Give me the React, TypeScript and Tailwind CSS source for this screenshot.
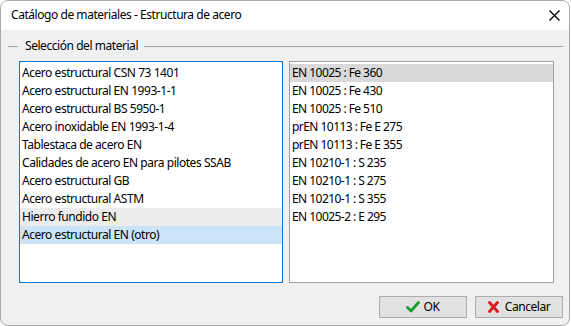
import React from "react";

const leftItems = [
  "Acero estructural CSN 73 1401",
  "Acero estructural EN 1993-1-1",
  "Acero estructural BS 5950-1",
  "Acero inoxidable EN 1993-1-4",
  "Tablestaca de acero EN",
  "Calidades de acero EN para pilotes SSAB",
  "Acero estructural GB",
  "Acero estructural ASTM",
  "Hierro fundido EN",
  "Acero estructural EN (otro)",
];

const rightItems = [
  "EN 10025 : Fe 360",
  "EN 10025 : Fe 430",
  "EN 10025 : Fe 510",
  "prEN 10113 : Fe E 275",
  "prEN 10113 : Fe E 355",
  "EN 10210-1 : S 235",
  "EN 10210-1 : S 275",
  "EN 10210-1 : S 355",
  "EN 10025-2 : E 295",
];

const font = { fontFamily: '"Noto Sans", "Open Sans", sans-serif' };

export default function App() {
  return (
    <div className="w-[571px] h-[326px] bg-white text-[12px] text-black" style={font}>
      <div className="w-[570px] h-[326px] border border-[#a9a9a9] rounded-[8px] overflow-hidden flex flex-col bg-[#f0f0f0]">
        <div className="h-[29px] bg-white flex items-center justify-between pl-[10px] pr-[8px] shrink-0">
          <span className="leading-none tracking-[-0.45px] -mt-[1px]">Catálogo de materiales - Estructura de acero</span>
          <svg width="11" height="11" viewBox="0 0 11 11" className="mr-[1px]">
            <path d="M0.5 0.5 L10.5 10.5 M10.5 0.5 L0.5 10.5" stroke="#000" strokeWidth="1.4" />
          </svg>
        </div>
        <div className="flex-1 flex flex-col">
          <div className="h-[16px] mt-[8px] flex items-center ml-[7px] mr-[6px]">
            <div className="w-[10px] h-px bg-[#a0a0a0]" />
            <span className="ml-[7px] mr-[6px] leading-none tracking-[-0.45px]">Selección del material</span>
            <div className="flex-1 h-px bg-[#a0a0a0]" />
          </div>
          <div className="flex mt-[7px] ml-[18px] gap-[6px]">
            <div className="w-[264px] h-[222px] border border-[#0078d7] bg-white pt-[2px]">
              {leftItems.map((t, i) => (
                <div
                  key={t}
                  className={
                    "h-[18px] flex items-center pl-[2px] leading-none tracking-[-0.45px] " +
                    (i === 8 ? "bg-[#ececec]" : i === 9 ? "bg-[#cce4f7]" : "")
                  }
                >
                  {t}
                </div>
              ))}
            </div>
            <div className="w-[265px] h-[222px] border border-[#a0a0a0] bg-white pt-[2px]">
              {rightItems.map((t, i) => (
                <div
                  key={t}
                  className={
                    "h-[18px] flex items-center pl-[2px] leading-none tracking-[-0.55px] " +
                    (i === 0 ? "bg-[#d9d9d9]" : "")
                  }
                >
                  {t}
                </div>
              ))}
            </div>
          </div>
          <div className="flex justify-end gap-[8px] mt-[13px] mr-[6px]">
            <button className="w-[88px] h-[22px] bg-[#e1e1e1] border border-[#adadad] flex items-center justify-center gap-[3px] leading-none">
              <svg width="14" height="12" viewBox="0 0 14 12">
                <path d="M1.5 6.5 L5 10 L12.5 1.5" stroke="#1a9a32" strokeWidth="2.8" fill="none" strokeLinecap="round" strokeLinejoin="round" />
              </svg>
              <span className="tracking-[-0.3px]">OK</span>
            </button>
            <button className="w-[88px] h-[22px] bg-[#e1e1e1] border border-[#adadad] flex items-center justify-center gap-[6px] leading-none">
              <svg width="11" height="12" viewBox="0 0 11 12">
                <path d="M1.5 1.5 L9.5 10.5 M9.5 1.5 L1.5 10.5" stroke="#e0141e" strokeWidth="2.8" fill="none" strokeLinecap="round" />
              </svg>
              <span className="tracking-[-0.45px]">Cancelar</span>
            </button>
          </div>
        </div>
      </div>
    </div>
  );
}
